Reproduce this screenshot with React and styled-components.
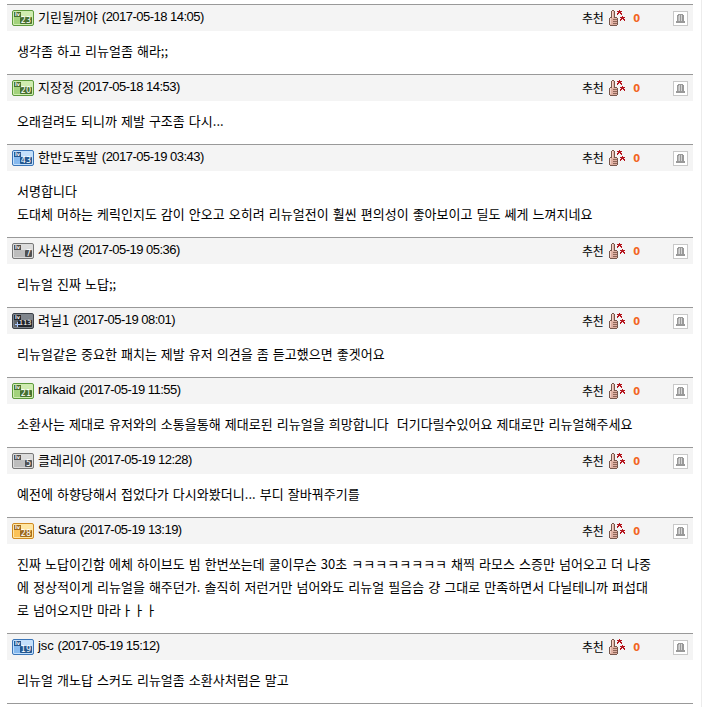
import styled, { createGlobalStyle } from "styled-components";

const GlobalStyle = createGlobalStyle`
  body {
    margin: 0;
    background: #fff;
    color: #000;
    font-family: "Noto Sans CJK KR", sans-serif;
  }
`;

const Page = styled.main`
  box-sizing: border-box;
  width: 702px;
  height: 707px;
  padding: 4px 8px 0 7px;
  border-right: 1px solid #ececec;
  overflow: hidden;
`;

const List = styled.ul`
  margin: 0;
  padding: 0;
  list-style: none;
  border-bottom: 1px solid #999;
`;

const Item = styled.li`
  border-top: 1px solid #999;
`;

const Header = styled.div`
  display: flex;
  align-items: center;
  box-sizing: border-box;
  height: 26px;
  padding: 0 5px;
  background: #f4f4f4;
`;

const Author = styled.div`
  display: flex;
  align-items: center;
  flex: 1;
  height: 20px;
  margin: 0 0 3px 4px;
  font-size: 13px;
  line-height: 20px;
  white-space: pre;
`;

const Name = styled.span`
  font-family: ${({ $latin }) =>
    $latin
      ? '"Liberation Sans", sans-serif'
      : '"Noto Sans CJK KR", sans-serif'};
  letter-spacing: ${({ $latin }) => ($latin ? "-0.1px" : "0")};
`;

const Time = styled.span`
  margin-left: 4px;
  font-family: "Liberation Sans", sans-serif;
  font-size: 13px;
  letter-spacing: -0.52px;
`;

const Votes = styled.div`
  display: flex;
  align-items: center;
  width: 91px;
  font-size: 12px;
  line-height: 20px;
  letter-spacing: -0.4px;
`;

const Count = styled.span`
  margin: 1px 0 0 7px;
  color: #f26522;
  font: bold 11px/20px "DejaVu Sans Condensed", "DejaVu Sans", sans-serif;
  letter-spacing: 0;
`;

const Report = styled.button`
  display: flex;
  align-items: center;
  justify-content: center;
  box-sizing: border-box;
  width: 15px;
  height: 15px;
  margin-top: 1px;
  padding: 0;
  border: 1px solid #c8c8c8;
  background: #fff;
`;

const Body = styled.div`
  padding: 8px 10px 12px;
  font-size: 13px;
  line-height: 23px;
  letter-spacing: 0.03px;
  word-spacing: 1.05px;
`;

const Line = styled.p`
  margin: 0;
  white-space: pre;
`;

const badgeColors = {
  green: { edge: "#5d9a3c", top: "#cfecb0", fill: "#a3d27c", ink: "#47702f" },
  blue: { edge: "#3a75b8", top: "#c4e0fb", fill: "#86b9ee", ink: "#24578f" },
  gray: { edge: "#777", top: "#dcdcdc", fill: "#bdbdbd", ink: "#505050" },
  dark: { edge: "#3c4148", top: "#7f858c", fill: "#5c6269", ink: "#22262c" },
  orange: { edge: "#d08a22", top: "#ffe6a2", fill: "#fbc258", ink: "#a06a1e" },
};

const Badge = styled.span`
  display: flex;
  flex-direction: column;
  justify-content: space-between;
  position: relative;
  box-sizing: border-box;
  flex: none;
  width: 22px;
  height: 16px;
  padding: 1px;
  border: 1px solid ${({ $c }) => $c.edge};
  border-radius: 2px;
  background: linear-gradient(${({ $c }) => `${$c.top} 45%, ${$c.fill} 45%`});
  box-shadow: inset 0 0 0 1px ${({ $c }) => $c.top};
  font-family: "DejaVu Sans", sans-serif;
  color: #fff;
`;

const LevelMark = styled.span`
  align-self: flex-start;
  width: 7px;
  height: 5px;
  background: ${({ $c }) => $c.ink};
  font-size: 5px;
  font-weight: bold;
  line-height: 5px;
  text-align: center;
`;

const Level = styled.span`
  align-self: flex-end;
  height: 7px;
  padding: 0 1px;
  border-radius: 1px;
  background: ${({ $c }) => $c.ink};
  font-size: ${({ $small }) => ($small ? 7 : 8)}px;
  line-height: 7px;
  letter-spacing: ${({ $small }) => ($small ? "-0.4px" : "0")};
`;

const Sparkle = styled.svg`
  position: absolute;
  left: 2px;
  bottom: 1px;
`;

function LevelBadge({ level, tone }) {
  const c = badgeColors[tone];
  return (
    <Badge $c={c}>
      <LevelMark $c={c}>lv</LevelMark>
      <Level $c={c} $small={level > 99}>
        {level}
      </Level>
      {tone === "dark" && (
        <Sparkle width="5" height="5">
          <path d="M2 0h1v2h2v1H3v2H2V3H0V2h2z" fill="#a9c8ff" />
        </Sparkle>
      )}
    </Badge>
  );
}

const ThumbSvg = styled.svg`
  flex: none;
  margin: -1px 0 0 6px;
`;

// small red burst, 5x5 pixels
const BURST = "h1v1h2v1h-1v1h1v2h-1v-1h-1v-1h-1v1h-1v1h-1v-2h1v-1h-1v-1h2z";

function ThumbIcon() {
  return (
    <ThumbSvg width="17" height="16" shapeRendering="crispEdges">
      <path d="M3 0h2v1h1v6h2v1h1v7H8v1H1v-1H0V8h1V7h1V1h1z" fill="#77574c" />
      <path d="M3 1h2v7h3v7H1V8h2z" fill="#dfb0a2" />
      <path d="M3 1h1v7H3zM1 8h1v6H1z" fill="#f3d3c8" />
      <path d="M4 9h4v1H4zM4 11h4v1H4zM4 13h4v1H4z" fill="#8f6659" />
      <path d={`M10 0${BURST}M13 6${BURST}`} fill="#b5141c" />
    </ThumbSvg>
  );
}

function SirenIcon() {
  return (
    <svg width="9" height="9" shapeRendering="crispEdges">
      <path d="M2 0h5v1h1v6h1v2H0V7h1V1h1z" fill="#999" />
      <path d="M3 1h1v6H3zM5 1h1v6H5z" fill="#d4d4d4" />
      <path d="M2 2h1v5H2z" fill="#bbb" />
    </svg>
  );
}

const comments = [
  {
    level: 23,
    tone: "green",
    name: "기린될꺼야",
    time: "2017-05-18 14:05",
    lines: ["생각좀 하고 리뉴얼좀 해라;;"],
  },
  {
    level: 20,
    tone: "green",
    name: "지장정",
    time: "2017-05-18 14:53",
    lines: ["오래걸려도 되니까 제발 구조좀 다시..."],
  },
  {
    level: 43,
    tone: "blue",
    name: "한반도폭발",
    time: "2017-05-19 03:43",
    lines: [
      "서명합니다",
      "도대체 머하는 케릭인지도 감이 안오고 오히려 리뉴얼전이 훨씬 편의성이 좋아보이고 딜도 쎄게 느껴지네요",
    ],
  },
  {
    level: 7,
    tone: "gray",
    name: "사신쩡",
    time: "2017-05-19 05:36",
    lines: ["리뉴얼 진짜 노답;;"],
  },
  {
    level: 113,
    tone: "dark",
    name: "려닐1",
    time: "2017-05-19 08:01",
    lines: ["리뉴얼같은 중요한 패치는 제발 유저 의견을 좀 듣고했으면 좋겟어요"],
  },
  {
    level: 21,
    tone: "green",
    name: "ralkaid",
    latin: true,
    time: "2017-05-19 11:55",
    lines: [
      "소환사는 제대로 유저와의 소통을통해 제대로된 리뉴얼을 희망합니다  더기다릴수있어요 제대로만 리뉴얼해주세요",
    ],
  },
  {
    level: 5,
    tone: "gray",
    name: "클레리아",
    time: "2017-05-19 12:28",
    lines: ["예전에 하향당해서 접었다가 다시와봤더니... 부디 잘바꿔주기를"],
  },
  {
    level: 28,
    tone: "orange",
    name: "Satura",
    latin: true,
    time: "2017-05-19 13:19",
    lines: [
      "진짜 노답이긴함 에체 하이브도 빔 한번쏘는데 쿨이무슨 30초 ㅋㅋㅋㅋㅋㅋㅋㅋ 채찍 라모스 스증만 넘어오고 더 나중",
      "에 정상적이게 리뉴얼을 해주던가. 솔직히 저런거만 넘어와도 리뉴얼 필음슴 걍 그대로 만족하면서 다닐테니까 퍼섭대",
      "로 넘어오지만 마라ㅏㅏㅏ",
    ],
  },
  {
    level: 19,
    tone: "blue",
    name: "jsc",
    latin: true,
    time: "2017-05-19 15:12",
    lines: ["리뉴얼 개노답 스커도 리뉴얼좀 소환사처럼은 말고"],
  },
];

function Comment({ comment }) {
  return (
    <Item>
      <Header>
        <LevelBadge level={comment.level} tone={comment.tone} />
        <Author>
          <Name $latin={comment.latin}>{comment.name}</Name>
          <Time>({comment.time})</Time>
        </Author>
        <Votes>
          추천
          <ThumbIcon />
          <Count>0</Count>
        </Votes>
        <Report aria-label="신고">
          <SirenIcon />
        </Report>
      </Header>
      <Body>
        {comment.lines.map((line) => (
          <Line key={line}>{line}</Line>
        ))}
      </Body>
    </Item>
  );
}

function App() {
  return (
    <Page>
      <GlobalStyle />
      <List>
        {comments.map((comment) => (
          <Comment comment={comment} key={comment.time} />
        ))}
      </List>
    </Page>
  );
}

export default App;
